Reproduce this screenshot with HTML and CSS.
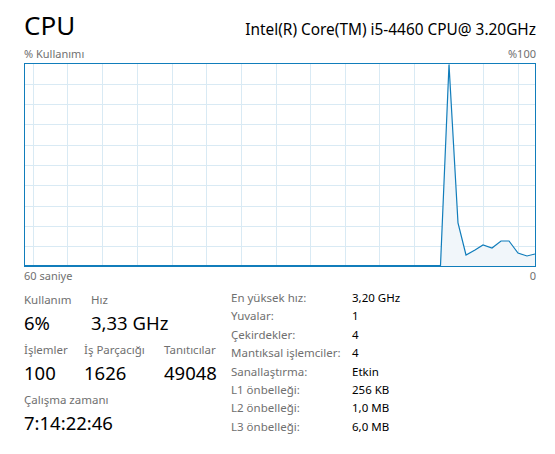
FILE: index.html
```html
<!DOCTYPE html>
<html lang="tr">
<head>
<meta charset="utf-8">
<link rel="stylesheet" href="styles.css">
</head>
<body>
<div class="page">
  <div class="header">
    <div class="title">CPU</div>
    <div class="model">Intel(R) Core(TM) i5-4460 CPU@ 3.20GHz</div>
  </div>
  <div class="axis top">
    <span>% Kullanımı</span>
    <span>%100</span>
  </div>
  <div class="graph">
    <svg width="510" height="202" viewBox="0 0 510 202">
      <g class="grid">
        <line x1="8.5" y1="0" x2="8.5" y2="202"/>
        <line x1="42.5" y1="0" x2="42.5" y2="202"/>
        <line x1="77.5" y1="0" x2="77.5" y2="202"/>
        <line x1="112.5" y1="0" x2="112.5" y2="202"/>
        <line x1="147.5" y1="0" x2="147.5" y2="202"/>
        <line x1="181.5" y1="0" x2="181.5" y2="202"/>
        <line x1="216.5" y1="0" x2="216.5" y2="202"/>
        <line x1="251.5" y1="0" x2="251.5" y2="202"/>
        <line x1="285.5" y1="0" x2="285.5" y2="202"/>
        <line x1="320.5" y1="0" x2="320.5" y2="202"/>
        <line x1="354.5" y1="0" x2="354.5" y2="202"/>
        <line x1="389.5" y1="0" x2="389.5" y2="202"/>
        <line x1="424.5" y1="0" x2="424.5" y2="202"/>
        <line x1="458.5" y1="0" x2="458.5" y2="202"/>
        <line x1="493.5" y1="0" x2="493.5" y2="202"/>
        <line x1="0" y1="20.5" x2="510" y2="20.5"/>
        <line x1="0" y1="40.5" x2="510" y2="40.5"/>
        <line x1="0" y1="60.5" x2="510" y2="60.5"/>
        <line x1="0" y1="81.5" x2="510" y2="81.5"/>
        <line x1="0" y1="101.5" x2="510" y2="101.5"/>
        <line x1="0" y1="121.5" x2="510" y2="121.5"/>
        <line x1="0" y1="142.5" x2="510" y2="142.5"/>
        <line x1="0" y1="162.5" x2="510" y2="162.5"/>
        <line x1="0" y1="182.5" x2="510" y2="182.5"/>
      </g>
      <polygon class="area" points="0,202 415.5,202 424,0 433,159 441,191 450,186 458,181 467,184 476,177 484,177 493,189 502,192 510,190 510,202"/>
      <polyline class="line" points="0,201.5 415.5,201.5 424,0.5 433,159 441,191 450,186 458,181 467,184 476,177 484,177 493,189 502,192 510,190"/>
    </svg>
  </div>
  <div class="axis bottom">
    <span>60 saniye</span>
    <span>0</span>
  </div>
  <div class="stats">
    <div class="left">
      <div class="row">
        <div class="stat w67"><div class="label">Kullanım</div><div class="value">6%</div></div>
        <div class="stat"><div class="label">Hız</div><div class="value">3,33 GHz</div></div>
      </div>
      <div class="row">
        <div class="stat w60"><div class="label">İşlemler</div><div class="value">100</div></div>
        <div class="stat w80"><div class="label">İş Parçacığı</div><div class="value">1626</div></div>
        <div class="stat"><div class="label">Tanıtıcılar</div><div class="value">49048</div></div>
      </div>
      <div class="row">
        <div class="stat"><div class="label">Çalışma zamanı</div><div class="value">7:14:22:46</div></div>
      </div>
    </div>
    <div class="right">
      <div class="k">En yüksek hız:</div><div class="v">3,20 GHz</div>
      <div class="k">Yuvalar:</div><div class="v">1</div>
      <div class="k">Çekirdekler:</div><div class="v">4</div>
      <div class="k">Mantıksal işlemciler:</div><div class="v">4</div>
      <div class="k">Sanallaştırma:</div><div class="v">Etkin</div>
      <div class="k">L1 önbelleği:</div><div class="v">256 KB</div>
      <div class="k">L2 önbelleği:</div><div class="v">1,0 MB</div>
      <div class="k">L3 önbelleği:</div><div class="v">6,0 MB</div>
    </div>
  </div>
</div>
</body>
</html>
```
FILE: styles.css
```css
html, body {
  margin: 0;
  padding: 0;
  background: #ffffff;
}
body {
  font-family: "Noto Sans", "Open Sans", sans-serif;
  color: #000;
}
.page {
  padding: 6px 19px 0 24px;
  width: 512px;
}
.header {
  display: flex;
  justify-content: space-between;
  align-items: baseline;
  height: 40px;
}
.title {
  font-size: 26px;
  line-height: 38px;
}
.model {
  font-size: 15.4px;
  line-height: 38px;
}
.axis {
  display: flex;
  justify-content: space-between;
  font-size: 11px;
  color: #707070;
  line-height: 15px;
}
.axis.top {
  height: 17px;
}
.axis.bottom {
  height: 16px;
  padding-top: 1px;
}
.graph {
  border: 1px solid #117dbb;
  width: 510px;
  height: 202px;
}
.graph svg {
  display: block;
}
.grid line {
  stroke: #d9eaf4;
  stroke-width: 1;
}
.area {
  fill: #f1f6fa;
  stroke: none;
}
.line {
  fill: none;
  stroke: #117dbb;
  stroke-width: 1.2;
}
.stats {
  display: flex;
  margin-top: 7px;
}
.left {
  width: 207px;
  display: flex;
  flex-direction: column;
}
.row {
  display: flex;
  margin-bottom: 5px;
}
.stat .label {
  font-size: 11.5px;
  color: #707070;
  line-height: 18px;
}
.stat .value {
  font-size: 18.5px;
  line-height: 27px;
}
.w67 { width: 67px; }
.w60 { width: 60px; }
.w80 { width: 80px; }
.right {
  display: grid;
  grid-template-columns: 121px auto;
  align-content: start;
  font-size: 11.5px;
  line-height: 18.4px;
  margin-top: -2px;
}
.right .k { color: #707070; }
.right .v { color: #000; }
```
